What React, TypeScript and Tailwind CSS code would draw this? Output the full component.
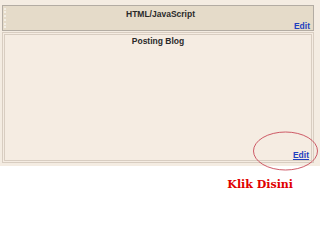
import React from "react";

export default function App() {
  return (
    <div className="relative w-[320px] h-[240px] bg-white overflow-hidden" style={{ fontFamily: '"Liberation Sans", Arial, sans-serif' }}>
      <div className="h-[166px] bg-[#f4ece2] pt-[5px] pl-[2px] pr-[6px] flex flex-col gap-[1px]">
        <div className="h-[26px] border border-[#b3aca3] bg-[#e5dbc9] flex">
          <div className="w-[4px] ml-[1px] my-[2px] border-l-2 border-dotted border-[#f3eee5]" />
          <div className="flex-1 flex flex-col">
            <div className="text-center text-[8.5px] font-bold text-[#2a2a2a] leading-none mt-[4px]">HTML/JavaScript</div>
            <div className="text-right pr-[3px] text-[8.5px] font-bold text-[#1f3fbf] leading-none mt-[3px]">Edit</div>
          </div>
        </div>
        <div className="h-[131px] border-[3px] border-double border-[#d8cdc1] bg-[#f5ece2] flex flex-col">
          <div className="text-center text-[8.5px] font-bold text-[#2a2a2a] leading-none mt-[2px]">Posting Blog</div>
          <div className="flex-1" />
          <div className="text-right pr-[2px] text-[8.5px] font-bold text-[#1f3fbf] leading-none underline mb-[1px]">Edit</div>
        </div>
      </div>
      <div className="flex justify-end pr-[27px] mt-[13px]">
        <span className="text-[11px] font-bold text-[#e00000] leading-none" style={{ fontFamily: '"DejaVu Serif", serif' }}>Klik Disini</span>
      </div>
      <svg className="absolute left-0 top-0" width="320" height="240">
        <ellipse cx="285.5" cy="151" rx="32" ry="19" fill="none" stroke="#c84a58" strokeWidth="0.9" />
      </svg>
    </div>
  );
}
